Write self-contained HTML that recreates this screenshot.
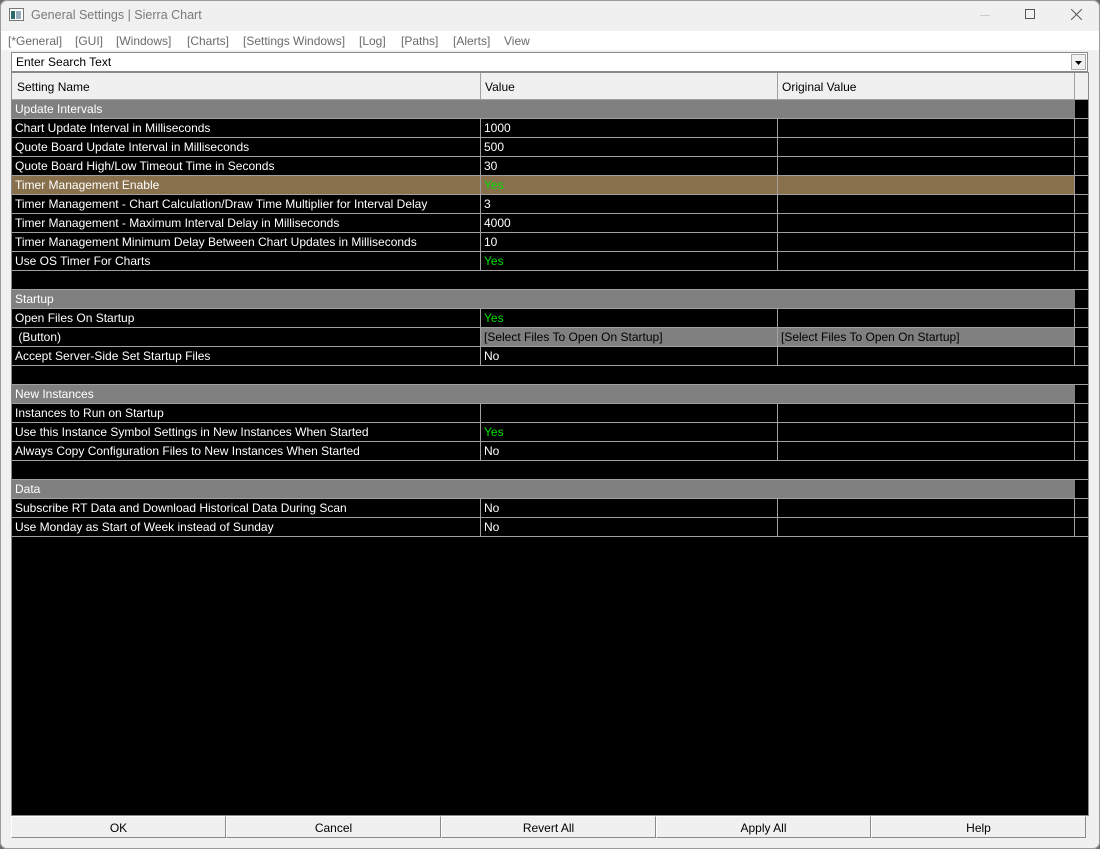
<!DOCTYPE html>
<html><head><style>
*{margin:0;padding:0;box-sizing:border-box}
body{width:1100px;height:849px;background:#6a6a6a;font-family:"Liberation Sans",sans-serif;font-size:12px;overflow:hidden;position:relative}
.win{position:absolute;left:0;top:0;width:1100px;height:849px;background:#f0f0f0;box-shadow:inset 0 0 0 1px #9a9a9a;border-radius:7px}
.title{position:absolute;left:31px;top:8px;color:#7a7a7a;font-size:12.5px}
.menu{position:absolute;left:1px;top:31px;width:1098px;height:19px;background:#fff}
.menu span{position:absolute;top:3px;color:#6a6a6a;font-size:12px}
.search{position:absolute;left:11px;top:52px;width:1077px;height:20px;background:#fff;border:1px solid #8a8a8a}
.search .t{position:absolute;left:4px;top:2px}
.dd{position:absolute;right:1px;top:1px;width:15px;height:16px;background:#f0f0f0;border:1px solid #aaa}
.grid{position:absolute;left:11px;top:72px;width:1078px;height:744px;background:#000;border:1px solid #8a8a8a}
.hdr{position:absolute;left:0;top:0;width:1076px;height:27px;background:#f0f0f0;border-bottom:1px solid #a0a0a0}
.hdr div{position:absolute;top:0;height:26px;border-right:1px solid #a0a0a0;padding:7px 0 0 5px}
.row{position:absolute;left:0;width:1076px;height:19px;border-bottom:1px solid #a0a0a0;color:#fff}
.row div{position:absolute;top:0;height:18px;padding:2px 0 0 3px;white-space:nowrap}
.c1{left:0;width:469px;border-right:1px solid #a0a0a0}
.c2{left:469px;width:297px;border-right:1px solid #a0a0a0}
.c3{left:766px;width:297px;border-right:1px solid #a0a0a0}
.g{background:#808080}
.br{background:#88704c}
.y{color:#00e000}
.gb{background:#808080;color:#000}
.btn{position:absolute;top:816px;height:22px;width:215px;background:#f0f0f0;border:1px solid #8a8a8a;border-top-color:#fff;border-left-color:#fff;text-align:center;padding-top:4px}
</style></head><body><div class="win">
<svg style="position:absolute;left:9px;top:8px" width="15" height="13"><rect x="0.5" y="0.5" width="14" height="12" fill="#fff" stroke="#777"/><rect x="2" y="3" width="4" height="8" fill="#2a6a6a"/><rect x="7" y="3" width="5" height="8" fill="#9ab"/></svg>
<div class="title">General Settings | Sierra Chart</div>
<div style="position:absolute;left:980px;top:15px;width:10px;height:1px;background:#ccc"></div>
<div style="position:absolute;left:1025px;top:9px;width:10px;height:10px;border:1px solid #555"></div>
<svg style="position:absolute;left:1071px;top:9px" width="11" height="11"><path d="M0 0L11 11M11 0L0 11" stroke="#555" stroke-width="1"/></svg>
<div class="menu"><span style="left:7px">[*General]</span><span style="left:74px">[GUI]</span><span style="left:115px">[Windows]</span><span style="left:186px">[Charts]</span><span style="left:242px">[Settings Windows]</span><span style="left:358px">[Log]</span><span style="left:400px">[Paths]</span><span style="left:452px">[Alerts]</span><span style="left:503px">View</span></div>
<div class="search"><span class="t">Enter Search Text</span><div class="dd"><svg width="13" height="14"><path d="M3 6h7l-3.5 4z" fill="#000"/></svg></div></div>
<div class="grid">
<div class="hdr"><div style="left:0;width:469px">Setting Name</div><div style="left:469px;width:297px;padding-left:4px">Value</div><div style="left:766px;width:297px;padding-left:4px">Original Value</div></div>
<div class="row" style="top:27px"><div class="g" style="left:0;width:1063px">Update Intervals</div></div>
<div class="row" style="top:46px"><div class="c1">Chart Update Interval in Milliseconds</div><div class="c2">1000</div><div class="c3"></div></div>
<div class="row" style="top:65px"><div class="c1">Quote Board Update Interval in Milliseconds</div><div class="c2">500</div><div class="c3"></div></div>
<div class="row" style="top:84px"><div class="c1">Quote Board High/Low Timeout Time in Seconds</div><div class="c2">30</div><div class="c3"></div></div>
<div class="row" style="top:103px"><div class="c1 br">Timer Management Enable</div><div class="c2 br y">Yes</div><div class="c3 br"></div></div>
<div class="row" style="top:122px"><div class="c1">Timer Management - Chart Calculation/Draw Time Multiplier for Interval Delay</div><div class="c2">3</div><div class="c3"></div></div>
<div class="row" style="top:141px"><div class="c1">Timer Management - Maximum Interval Delay in Milliseconds</div><div class="c2">4000</div><div class="c3"></div></div>
<div class="row" style="top:160px"><div class="c1">Timer Management Minimum Delay Between Chart Updates in Milliseconds</div><div class="c2">10</div><div class="c3"></div></div>
<div class="row" style="top:179px"><div class="c1">Use OS Timer For Charts</div><div class="c2 y">Yes</div><div class="c3"></div></div>
<div class="row" style="top:198px"></div>
<div class="row" style="top:217px"><div class="g" style="left:0;width:1063px">Startup</div></div>
<div class="row" style="top:236px"><div class="c1">Open Files On Startup</div><div class="c2 y">Yes</div><div class="c3"></div></div>
<div class="row" style="top:255px"><div class="c1">&nbsp;(Button)</div><div class="c2 gb">[Select Files To Open On Startup]</div><div class="c3 gb">[Select Files To Open On Startup]</div></div>
<div class="row" style="top:274px"><div class="c1">Accept Server-Side Set Startup Files</div><div class="c2">No</div><div class="c3"></div></div>
<div class="row" style="top:293px"></div>
<div class="row" style="top:312px"><div class="g" style="left:0;width:1063px">New Instances</div></div>
<div class="row" style="top:331px"><div class="c1">Instances to Run on Startup</div><div class="c2"></div><div class="c3"></div></div>
<div class="row" style="top:350px"><div class="c1">Use this Instance Symbol Settings in New Instances When Started</div><div class="c2 y">Yes</div><div class="c3"></div></div>
<div class="row" style="top:369px"><div class="c1">Always Copy Configuration Files to New Instances When Started</div><div class="c2">No</div><div class="c3"></div></div>
<div class="row" style="top:388px"></div>
<div class="row" style="top:407px"><div class="g" style="left:0;width:1063px">Data</div></div>
<div class="row" style="top:426px"><div class="c1">Subscribe RT Data and Download Historical Data During Scan</div><div class="c2">No</div><div class="c3"></div></div>
<div class="row" style="top:445px"><div class="c1">Use Monday as Start of Week instead of Sunday</div><div class="c2">No</div><div class="c3"></div></div>
</div>
<div class="btn" style="left:11px">OK</div>
<div class="btn" style="left:226px">Cancel</div>
<div class="btn" style="left:441px">Revert All</div>
<div class="btn" style="left:656px">Apply All</div>
<div class="btn" style="left:871px">Help</div>
</div></body></html>
